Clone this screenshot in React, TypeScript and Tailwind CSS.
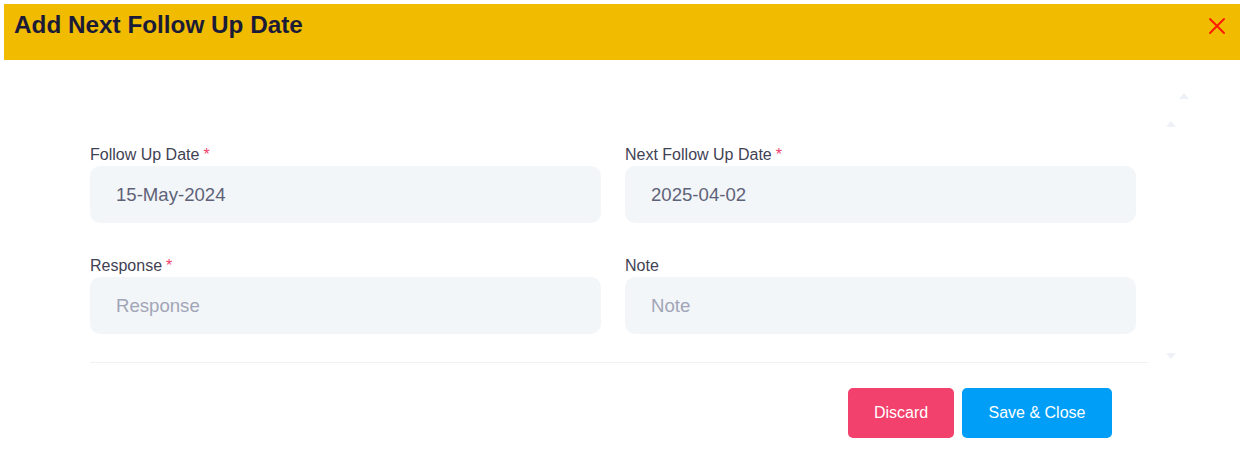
import React from "react";

const fields = [
   { label: "Follow Up Date", required: true, value: "15-May-2024" },
   { label: "Next Follow Up Date", required: true, value: "2025-04-02" },
   { label: "Response", required: true, placeholder: "Response" },
   { label: "Note", required: false, placeholder: "Note" },
];

export default function App() {
   return (
      <div
         className="w-[1244px] h-[452px] bg-white p-1 relative"
         style={{ fontFamily: '"Liberation Sans", Arial, sans-serif' }}
      >
         <div className="h-[56px] bg-[#f1bc00] flex items-start justify-between pl-[10px] pr-[14px]">
            <h2 className="text-[24.3px] leading-[28px] mt-[7px] font-bold text-[#1b1b38]">
               Add Next Follow Up Date
            </h2>
            <button className="mt-[13px] text-[#ff1a00]">
               <svg width="18" height="18" viewBox="0 0 18 18">
                  <path
                     d="M2 2 L16 16 M16 2 L2 16"
                     stroke="currentColor"
                     strokeWidth="2"
                     strokeLinecap="round"
                  />
               </svg>
            </button>
         </div>

         <div className="pl-[86px] pr-[92px] pt-[84px]">
            <div className="pr-[12px]">
               <div className="grid grid-cols-2 gap-x-[24px] gap-y-[32px]">
                  {fields.map(({ label, required, value, placeholder }) => (
                     <div key={label} className="flex flex-col">
                        <label className="text-[16px] leading-[22px] text-[#3f4254]">
                           {label}
                           {required && (
                              <span className="text-[#f1416c] ml-[4px]">*</span>
                           )}
                        </label>
                        <input
                           readOnly
                           value={value}
                           placeholder={placeholder}
                           className="h-[57px] rounded-[10px] bg-[#f3f6f9] px-[26px] text-[18.6px] text-[#5e6278] placeholder:text-[#a1a5b7] outline-none"
                        />
                     </div>
                  ))}
               </div>
            </div>
            <div className="mt-[28px] h-px bg-[#eff2f5]" />
            <div className="flex justify-end gap-[8px] mt-[25px] pr-[36px]">
               <button className="h-[50px] w-[106px] rounded-[5px] bg-[#f1416c] text-white text-[16px]">
                  Discard
               </button>
               <button className="h-[50px] w-[150px] rounded-[5px] bg-[#009ef7] text-white text-[16px]">
                  Save &amp; Close
               </button>
            </div>
         </div>

         <div className="absolute left-[1179px] top-[93px] w-0 h-0 border-l-[5px] border-r-[5px] border-b-[6px] border-l-transparent border-r-transparent border-b-[#eef1f5]" />
         <div className="absolute left-[1166px] top-[121px] w-0 h-0 border-l-[5px] border-r-[5px] border-b-[6px] border-l-transparent border-r-transparent border-b-[#eef1f5]" />
         <div className="absolute left-[1166px] top-[353px] w-0 h-0 border-l-[5px] border-r-[5px] border-t-[6px] border-l-transparent border-r-transparent border-t-[#eef1f5]" />
      </div>
   );
}
